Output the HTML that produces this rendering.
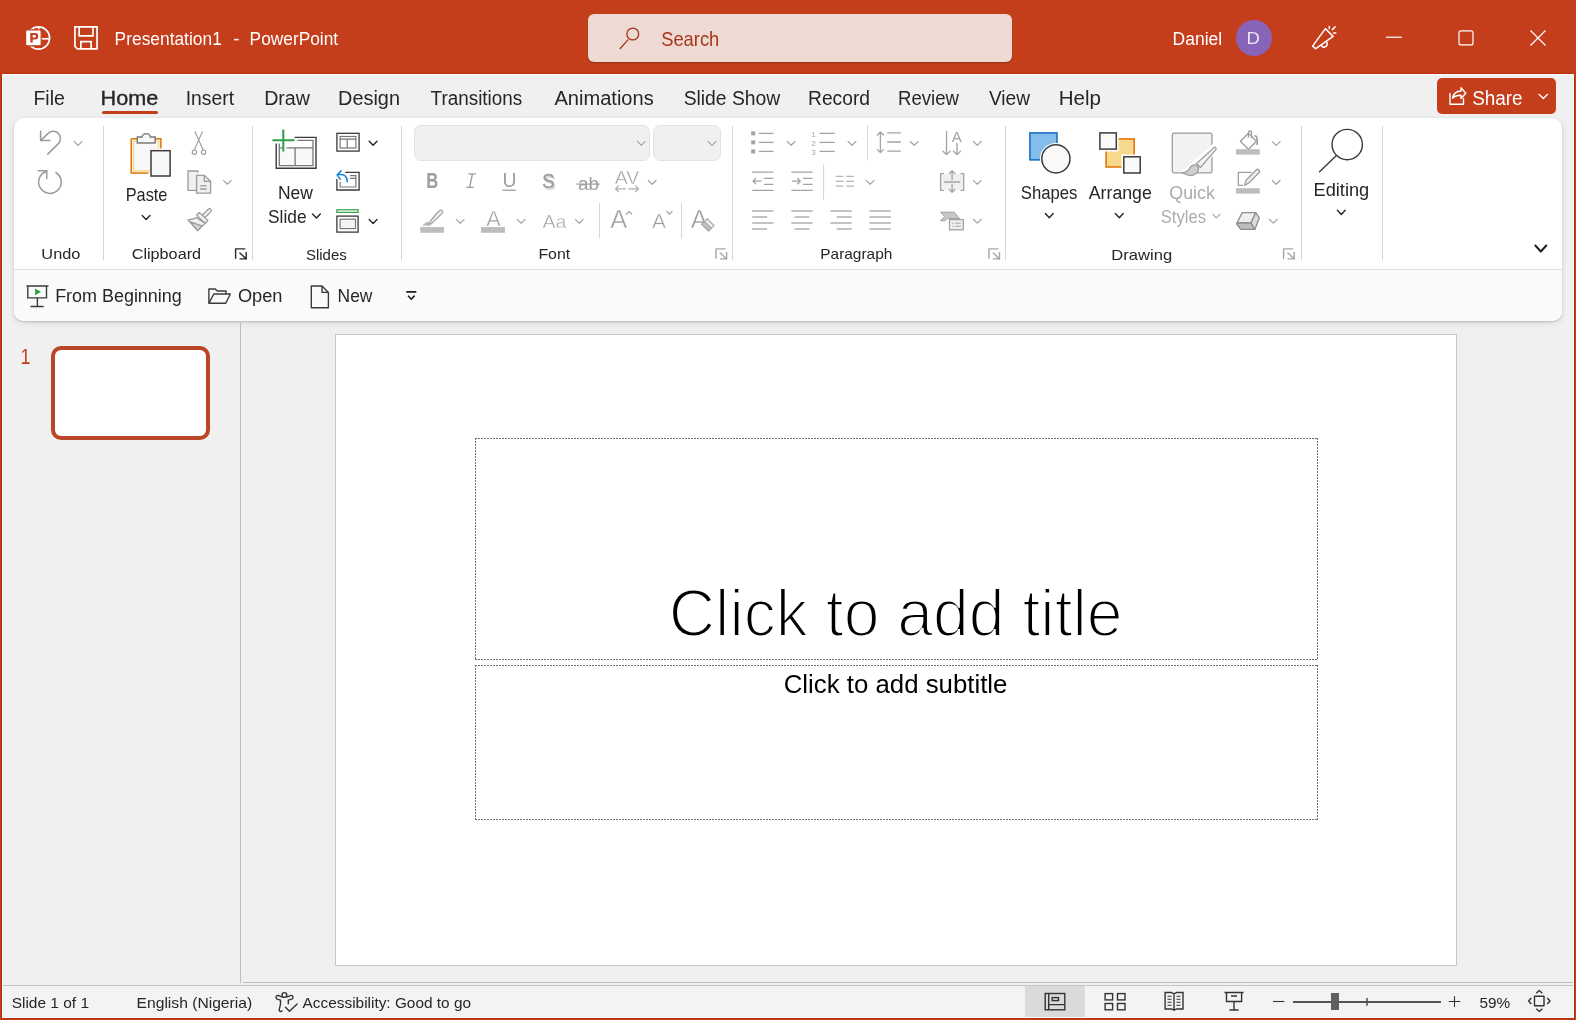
<!DOCTYPE html>
<html><head><meta charset="utf-8"><title>PowerPoint</title>
<style>
html,body{margin:0;padding:0;}
body{width:1576px;height:1020px;overflow:hidden;position:relative;background:#C43E1C;font-family:"Liberation Sans",sans-serif;}
svg text{font-kerning:normal;}
</style></head><body>
<div style="position:absolute;left:1px;top:73px;width:1574px;height:946px;background:#BE2E0A"></div>
<div style="position:absolute;left:2px;top:74px;width:1572px;height:944px;background:#F4FCFC"></div>
<div style="position:absolute;left:3px;top:75px;width:1570px;height:942px;background:#F0F0F0"></div>
<div style="position:absolute;left:14px;top:118px;width:1548px;height:203px;background:#FFFFFF;border-radius:10px;box-shadow:0 1px 2px rgba(0,0,0,0.16), 0 2px 7px rgba(0,0,0,0.10)"></div>
<div style="position:absolute;left:14px;top:269px;width:1548px;height:52px;background:#FAFAFA;border-radius:0 0 10px 10px;border-top:1px solid #E1E1E1;box-sizing:border-box"></div>
<div style="position:absolute;left:588px;top:14px;width:424px;height:48px;background:#EFD9D3;border-radius:6px;box-shadow:0 1px 2px rgba(0,0,0,0.25)"></div>
<div style="position:absolute;left:1236px;top:20px;width:36px;height:36px;background:#8764B8;border-radius:50%"></div>
<div style="position:absolute;left:1437px;top:78px;width:119px;height:36px;background:#C43E1C;border-radius:5px"></div>
<div style="position:absolute;left:240px;top:322px;width:1px;height:661px;background:#BEBEBE"></div>
<div style="position:absolute;left:243px;top:982px;width:1330px;height:1px;background:#BEBEBE"></div>
<div style="position:absolute;left:3px;top:985px;width:1570px;height:1px;background:#C4C4C4"></div>
<div style="position:absolute;left:3px;top:986px;width:1570px;height:31px;background:#F3F3F3"></div>
<div style="position:absolute;left:1025px;top:986px;width:60px;height:31px;background:#DADADA"></div>
<div style="position:absolute;left:335px;top:334px;width:1122px;height:632px;background:#FFFFFF;border:1px solid #C6C6C6;box-sizing:border-box"></div>
<div style="position:absolute;left:51px;top:346px;width:159px;height:94px;background:#FFFFFF;border:4px solid #BB4527;border-radius:10px;box-sizing:border-box"></div>
<div style="position:absolute;left:414px;top:125px;width:236px;height:36px;background:#F0F0F0;border:1px solid #E3E3E3;border-radius:7px;box-sizing:border-box"></div>
<div style="position:absolute;left:653px;top:125px;width:68px;height:36px;background:#F0F0F0;border:1px solid #E3E3E3;border-radius:7px;box-sizing:border-box"></div>
<div style="position:absolute;left:102px;top:111px;width:56px;height:3px;background:#C43E1C;border-radius:2px"></div>
<svg style="position:absolute;left:0;top:0;will-change:transform" width="1576" height="1020" viewBox="0 0 1576 1020">
<text x="114.61" y="44.70" font-family="Liberation Sans" font-size="18.31" font-weight="normal" fill="#FFFFFF" textLength="107.19" lengthAdjust="spacingAndGlyphs" >Presentation1</text>
<text x="233.18" y="44.70" font-family="Liberation Sans" font-size="18.31" font-weight="normal" fill="#FFFFFF" textLength="6.10" lengthAdjust="spacingAndGlyphs" >-</text>
<text x="249.61" y="44.70" font-family="Liberation Sans" font-size="18.31" font-weight="normal" fill="#FFFFFF" textLength="88.54" lengthAdjust="spacingAndGlyphs" >PowerPoint</text>
<text x="661.18" y="46.00" font-family="Liberation Sans" font-size="20.06" font-weight="normal" fill="#A5371B" textLength="58.08" lengthAdjust="spacingAndGlyphs" >Search</text>
<text x="1172.60" y="45.00" font-family="Liberation Sans" font-size="19.19" font-weight="normal" fill="#FFFFFF" textLength="49.53" lengthAdjust="spacingAndGlyphs" >Daniel</text>
<text x="1246.52" y="44.00" font-family="Liberation Sans" font-size="15.99" font-weight="normal" fill="#EDE6F7" textLength="13.35" lengthAdjust="spacingAndGlyphs" >D</text>
<text x="33.44" y="104.80" font-family="Liberation Sans" font-size="19.91" font-weight="normal" fill="#262626" textLength="31.36" lengthAdjust="spacingAndGlyphs" >File</text>
<text x="185.76" y="104.80" font-family="Liberation Sans" font-size="19.91" font-weight="normal" fill="#262626" textLength="48.36" lengthAdjust="spacingAndGlyphs" >Insert</text>
<text x="264.13" y="104.80" font-family="Liberation Sans" font-size="19.91" font-weight="normal" fill="#262626" textLength="45.84" lengthAdjust="spacingAndGlyphs" >Draw</text>
<text x="338.11" y="104.80" font-family="Liberation Sans" font-size="19.91" font-weight="normal" fill="#262626" textLength="61.84" lengthAdjust="spacingAndGlyphs" >Design</text>
<text x="430.62" y="104.80" font-family="Liberation Sans" font-size="19.91" font-weight="normal" fill="#262626" textLength="91.61" lengthAdjust="spacingAndGlyphs" >Transitions</text>
<text x="554.40" y="104.80" font-family="Liberation Sans" font-size="19.91" font-weight="normal" fill="#262626" textLength="99.34" lengthAdjust="spacingAndGlyphs" >Animations</text>
<text x="683.63" y="104.80" font-family="Liberation Sans" font-size="19.91" font-weight="normal" fill="#262626" textLength="96.63" lengthAdjust="spacingAndGlyphs" >Slide Show</text>
<text x="808.06" y="104.80" font-family="Liberation Sans" font-size="19.91" font-weight="normal" fill="#262626" textLength="61.96" lengthAdjust="spacingAndGlyphs" >Record</text>
<text x="898.01" y="104.80" font-family="Liberation Sans" font-size="19.91" font-weight="normal" fill="#262626" textLength="60.97" lengthAdjust="spacingAndGlyphs" >Review</text>
<text x="988.90" y="104.80" font-family="Liberation Sans" font-size="19.91" font-weight="normal" fill="#262626" textLength="41.09" lengthAdjust="spacingAndGlyphs" >View</text>
<text x="1058.66" y="104.80" font-family="Liberation Sans" font-size="19.91" font-weight="normal" fill="#262626" textLength="42.20" lengthAdjust="spacingAndGlyphs" >Help</text>
<text x="100.57" y="104.80" font-family="Liberation Sans" font-size="19.91" font-weight="normal" fill="#262626" textLength="57.75" lengthAdjust="spacingAndGlyphs" stroke="#262626" stroke-width="0.35">Home</text>
<text x="1472.15" y="104.80" font-family="Liberation Sans" font-size="19.91" font-weight="normal" fill="#FFFFFF" textLength="50.37" lengthAdjust="spacingAndGlyphs" >Share</text>
<text x="41.37" y="259.30" font-family="Liberation Sans" font-size="15.41" font-weight="normal" fill="#262626" textLength="39.09" lengthAdjust="spacingAndGlyphs" >Undo</text>
<text x="131.69" y="258.50" font-family="Liberation Sans" font-size="15.41" font-weight="normal" fill="#262626" textLength="69.37" lengthAdjust="spacingAndGlyphs" >Clipboard</text>
<text x="305.92" y="259.50" font-family="Liberation Sans" font-size="15.41" font-weight="normal" fill="#262626" textLength="40.88" lengthAdjust="spacingAndGlyphs" >Slides</text>
<text x="538.43" y="258.50" font-family="Liberation Sans" font-size="15.41" font-weight="normal" fill="#262626" textLength="31.66" lengthAdjust="spacingAndGlyphs" >Font</text>
<text x="820.27" y="259.00" font-family="Liberation Sans" font-size="15.41" font-weight="normal" fill="#262626" textLength="72.04" lengthAdjust="spacingAndGlyphs" >Paragraph</text>
<text x="1111.27" y="259.50" font-family="Liberation Sans" font-size="15.41" font-weight="normal" fill="#262626" textLength="60.86" lengthAdjust="spacingAndGlyphs" >Drawing</text>
<text x="125.70" y="201.00" font-family="Liberation Sans" font-size="18.31" font-weight="normal" fill="#262626" textLength="41.69" lengthAdjust="spacingAndGlyphs" >Paste</text>
<text x="278.00" y="198.60" font-family="Liberation Sans" font-size="18.31" font-weight="normal" fill="#262626" textLength="34.92" lengthAdjust="spacingAndGlyphs" >New</text>
<text x="268.02" y="222.70" font-family="Liberation Sans" font-size="18.31" font-weight="normal" fill="#262626" textLength="38.55" lengthAdjust="spacingAndGlyphs" >Slide</text>
<text x="1020.75" y="198.90" font-family="Liberation Sans" font-size="18.46" font-weight="normal" fill="#262626" textLength="56.67" lengthAdjust="spacingAndGlyphs" >Shapes</text>
<text x="1088.80" y="198.90" font-family="Liberation Sans" font-size="18.46" font-weight="normal" fill="#262626" textLength="62.96" lengthAdjust="spacingAndGlyphs" >Arrange</text>
<text x="1169.19" y="198.90" font-family="Liberation Sans" font-size="18.46" font-weight="normal" fill="#ADADAD" textLength="45.83" lengthAdjust="spacingAndGlyphs" >Quick</text>
<text x="1160.75" y="222.60" font-family="Liberation Sans" font-size="18.31" font-weight="normal" fill="#ADADAD" textLength="45.20" lengthAdjust="spacingAndGlyphs" >Styles</text>
<text x="1313.54" y="196.00" font-family="Liberation Sans" font-size="18.02" font-weight="normal" fill="#262626" textLength="55.69" lengthAdjust="spacingAndGlyphs" >Editing</text>
<text x="55.17" y="302.00" font-family="Liberation Sans" font-size="19.19" font-weight="normal" fill="#262626" textLength="126.59" lengthAdjust="spacingAndGlyphs" >From Beginning</text>
<text x="237.88" y="302.00" font-family="Liberation Sans" font-size="19.19" font-weight="normal" fill="#262626" textLength="44.63" lengthAdjust="spacingAndGlyphs" >Open</text>
<text x="337.61" y="302.00" font-family="Liberation Sans" font-size="19.19" font-weight="normal" fill="#262626" textLength="34.81" lengthAdjust="spacingAndGlyphs" >New</text>
<text x="11.70" y="1007.60" font-family="Liberation Sans" font-size="15.12" font-weight="normal" fill="#262626" textLength="77.35" lengthAdjust="spacingAndGlyphs" >Slide 1 of 1</text>
<text x="136.55" y="1007.60" font-family="Liberation Sans" font-size="15.12" font-weight="normal" fill="#262626" textLength="115.62" lengthAdjust="spacingAndGlyphs" >English (Nigeria)</text>
<text x="302.60" y="1007.60" font-family="Liberation Sans" font-size="15.12" font-weight="normal" fill="#262626" textLength="168.41" lengthAdjust="spacingAndGlyphs" >Accessibility: Good to go</text>
<text x="1479.38" y="1007.60" font-family="Liberation Sans" font-size="15.12" font-weight="normal" fill="#262626" textLength="30.78" lengthAdjust="spacingAndGlyphs" >59%</text>
<text x="20.46" y="364.00" font-family="Liberation Sans" font-size="22.53" font-weight="normal" fill="#C43E1C" textLength="9.97" lengthAdjust="spacingAndGlyphs" >1</text>
<text x="668.68" y="636.10" font-family="Liberation Sans" font-size="67.15" font-weight="normal" fill="#000000" textLength="453.90" lengthAdjust="spacingAndGlyphs" stroke="#FFFFFF" stroke-width="2.2">Click to add title</text>
<text x="783.71" y="693.00" font-family="Liberation Sans" font-size="26.16" font-weight="normal" fill="#000000" textLength="223.75" lengthAdjust="spacingAndGlyphs" >Click to add subtitle</text>
<line x1="475" y1="438.5" x2="1318" y2="438.5" stroke="#707070" stroke-width="1" stroke-dasharray="2 1" shape-rendering="crispEdges"/>
<line x1="475" y1="659.5" x2="1318" y2="659.5" stroke="#707070" stroke-width="1" stroke-dasharray="2 1" shape-rendering="crispEdges"/>
<line x1="475.5" y1="438" x2="475.5" y2="660" stroke="#707070" stroke-width="1" stroke-dasharray="2 1" shape-rendering="crispEdges"/>
<line x1="1317.5" y1="438" x2="1317.5" y2="660" stroke="#707070" stroke-width="1" stroke-dasharray="2 1" shape-rendering="crispEdges"/>
<line x1="475" y1="665.5" x2="1318" y2="665.5" stroke="#707070" stroke-width="1" stroke-dasharray="2 1" shape-rendering="crispEdges"/>
<line x1="475" y1="819.5" x2="1318" y2="819.5" stroke="#707070" stroke-width="1" stroke-dasharray="2 1" shape-rendering="crispEdges"/>
<line x1="475.5" y1="665" x2="475.5" y2="820" stroke="#707070" stroke-width="1" stroke-dasharray="2 1" shape-rendering="crispEdges"/>
<line x1="1317.5" y1="665" x2="1317.5" y2="820" stroke="#707070" stroke-width="1" stroke-dasharray="2 1" shape-rendering="crispEdges"/>
<line x1="103.5" y1="126" x2="103.5" y2="260" stroke="#D6D6D6" stroke-width="1"/>
<line x1="252.5" y1="126" x2="252.5" y2="260" stroke="#D6D6D6" stroke-width="1"/>
<line x1="401.5" y1="126" x2="401.5" y2="260" stroke="#D6D6D6" stroke-width="1"/>
<line x1="732.5" y1="126" x2="732.5" y2="260" stroke="#D6D6D6" stroke-width="1"/>
<line x1="1005.5" y1="126" x2="1005.5" y2="260" stroke="#D6D6D6" stroke-width="1"/>
<line x1="1301.5" y1="126" x2="1301.5" y2="260" stroke="#D6D6D6" stroke-width="1"/>
<line x1="1382.5" y1="126" x2="1382.5" y2="260" stroke="#D6D6D6" stroke-width="1"/>
<g><circle cx="38.5" cy="38" r="11.1" fill="none" stroke="#fff" stroke-width="1.6"/><line x1="38.8" y1="27" x2="38.8" y2="31" stroke="#fff" stroke-width="1.6"/><line x1="41" y1="38.8" x2="49.5" y2="38.8" stroke="#fff" stroke-width="1.6"/><rect x="25.6" y="29.8" width="15.6" height="16" rx="1.6" fill="#fff" stroke="#C43E1C" stroke-width="1.2"/><path d="M30.3 33 H35 A3.3 3.3 0 0 1 35 39.6 H32.7 V42.6 H30.3 Z M32.7 35 V37.6 H34.7 A1.3 1.3 0 0 0 34.7 35 Z" fill="#C43E1C" fill-rule="evenodd"/></g>
<path d="M74.95 26.95 H97.05 V48.95 H77.4 L74.95 46.5 Z M79.15 27.5 V35.85 H92.95 V27.5 M80.85 48.5 V41.65 H91.15 V48.5" fill="none" stroke="#fff" stroke-width="1.7" stroke-linejoin="miter"/>
<circle cx="632.8" cy="34" r="5.9" fill="none" stroke="#A5371B" stroke-width="1.3"/><line x1="627.9" y1="39.9" x2="620.2" y2="48.5" stroke="#A5371B" stroke-width="1.3" stroke-linecap="round"/>
<g fill="none" stroke="#fff" stroke-width="1.5" stroke-linejoin="round" stroke-linecap="round"><path d="M1325.4 28.6 L1333.1 36.4 L1315.8 48.7 L1312.6 46.1 Z"/><path d="M1321.4 45.5 A3 3 0 1 0 1326.8 42.2"/><line x1="1329.3" y1="26.4" x2="1329.3" y2="28.4"/><line x1="1332.3" y1="29.6" x2="1335.2" y2="26.8"/><line x1="1333.6" y1="32.9" x2="1335.8" y2="32.9"/></g>
<line x1="1386" y1="37.2" x2="1401.8" y2="37.2" stroke="#fff" stroke-width="1.2"/><rect x="1459" y="30.9" width="14" height="14" rx="2" fill="none" stroke="#fff" stroke-width="1.2"/><path d="M1530.5 30.5 L1545.5 45.5 M1545.5 30.5 L1530.5 45.5" stroke="#fff" stroke-width="1.2"/>
<g fill="none" stroke="#fff" stroke-width="1.4" stroke-linejoin="round" stroke-linecap="round"><path d="M1450 93.5 V104.2 H1463.5 V98.5"/><path d="M1452.6 98.2 C1453.5 93.5 1456.5 91 1461 91 V87.8 L1465.8 93.2 L1461 98.5 V95.2 C1457.5 95.2 1454.5 96 1452.6 98.2 Z"/><path d="M1539.2 94.6 L1543.3 98.4 L1547.4 94.6"/></g>
<g fill="none" stroke="#9B9B9B" stroke-width="1.5" stroke-linecap="round" stroke-linejoin="round"><path d="M40.6 131.3 V140.6 H49.9 M40.6 140.6 L48.2 133.4 A7.2 7.2 0 0 1 58.4 143.6 L47.8 154.1"/><path d="M55.9 172.5 A11.3 11.3 0 1 1 46.9 171.2"/><path d="M38.3 170.7 H46.7 V178.5"/></g>
<path d="M74.3 141.5 L78.1 145.3 L81.9 141.5" fill="none" stroke="#A6A6A6" stroke-width="1.2" stroke-linecap="round" stroke-linejoin="round"/>
<g><path d="M131.2 138.8 H160.9 V148.5 M148.5 173 H131.2 V138.8" fill="none" stroke="#E07400" stroke-width="1.5"/><path d="M132.7 140.3 H159.4 V148.5 H150.3 V171.5 H132.7 Z" fill="#F8D98C"/><path d="M134.2 141.8 H157.9 V148.5 H150.3 V170 H134.2 Z" fill="#F8F8F8"/><path d="M137.3 143 V137 H142 A4.3 4.3 0 0 1 150.4 137 H155.1 V143 Z" fill="#F6F6F6" stroke="#7A7A7A" stroke-width="1.4"/><rect x="151" y="150.7" width="19.1" height="25.3" fill="#F8F8F8" stroke="#3C3C3C" stroke-width="1.5"/></g>
<path d="M142.2 215.5 L146.1 219.5 L150.0 215.5" fill="none" stroke="#262626" stroke-width="1.4" stroke-linecap="round" stroke-linejoin="round"/>
<g fill="none" stroke="#9B9B9B" stroke-width="1.1"><path d="M194.8 131.2 L203.2 150 M202.6 131.2 L194.2 150"/><circle cx="194.4" cy="152.2" r="2.2"/><circle cx="203.6" cy="152.2" r="2.2"/></g>
<g fill="#F0F0F0" stroke="#9B9B9B" stroke-width="1.3" stroke-linejoin="miter"><path d="M196.3 190.3 H188 V171 H197.3 L198.6 172.3"/><path d="M196.6 175.3 H204.3 L210.6 181.3 V193.1 H196.6 Z"/><path d="M204.3 175.3 V181.3 H210.6" fill="none"/><path d="M200.2 185.8 H206.6 M200.2 189 H206.6" fill="none"/></g>
<path d="M223.5 180.4 L227.4 184.2 L231.3 180.4" fill="none" stroke="#A6A6A6" stroke-width="1.2" stroke-linecap="round" stroke-linejoin="round"/>
<g stroke="#9B9B9B" stroke-width="1.3" stroke-linejoin="round"><path d="M202.2 215.2 L208.3 209.2 A1.7 1.7 0 0 1 210.8 211.6 L204.8 217.7 Z" fill="#F4F4F4"/><path d="M196.6 217.6 L205.1 223.3 L197.6 230.6 C194.5 227.3 191.2 223.3 187.9 219.8 C191.5 219.6 194 218.8 196.6 217.6 Z" fill="#F0F0F0"/><path d="M190.3 221.8 L202 225.9 L197.6 230.6 Z" fill="#D3D3D3"/><path d="M199.3 212.4 L207.9 220.6 L205.2 223.4 L196.6 215.1 Z" fill="#F2F2F2"/></g>
<g fill="none" stroke="#262626" stroke-width="1.4" stroke-linecap="round" stroke-linejoin="round"><path d="M244.7 248.9 H235.6 V258.2"/><path d="M239.9 252.9 L246.2 258.9 M240.1 258.9 H246.2 V252.5"/></g>
<g fill="none" stroke-linejoin="miter"><path d="M294.6 137.4 H316 V168.3 H276.2 V143.6" stroke="#3A3A3A" stroke-width="1.4"/><rect x="279.7" y="147.8" width="33" height="17.5" fill="#F8F8F8" stroke="none"/><path d="M297.4 140.4 H313 V165.6 H279.3 V143.6 M286.4 147.8 H313 M279.3 147.8 H282 M295.1 147.8 V165.6" stroke="#787878" stroke-width="1.3"/><path d="M272.4 140.3 H294.6 M283.3 129.4 V151.6" stroke="#2E9E48" stroke-width="2"/></g>
<path d="M312.5 213.9 L316.4 218.1 L320.3 213.9" fill="none" stroke="#262626" stroke-width="1.4" stroke-linecap="round" stroke-linejoin="round"/>
<g fill="none"><rect x="336.9" y="133.3" width="22.2" height="17.8" stroke="#3A3A3A" stroke-width="1.3"/><rect x="340.1" y="136.5" width="15.8" height="11.5" stroke="#787878" stroke-width="1.2"/><path d="M340.1 139.1 H355.9 M347.2 139.1 V148" stroke="#787878" stroke-width="1.2"/><path d="M345.3 172.4 H359.1 V190 H336.9 V179" stroke="#3A3A3A" stroke-width="1.3"/><path d="M350 175.7 H355.9 V187 H340.1 V182 M350 178.3 H355.9" stroke="#787878" stroke-width="1.2"/><path d="M347.3 181.8 C347.3 176 344 173.5 337.3 174.8 M341.2 170.9 L337.1 174.9 L340.3 179.2" stroke="#1E88D8" stroke-width="1.5" stroke-linecap="round" stroke-linejoin="round"/><rect x="336.9" y="209.8" width="21.2" height="2.6" stroke="#2E9E48" stroke-width="1.2"/><rect x="336.9" y="216.1" width="21.2" height="16" stroke="#3A3A3A" stroke-width="1.3"/><rect x="340.1" y="219.2" width="15.4" height="9.4" fill="#F4F4F4" stroke="#787878" stroke-width="1.2"/></g>
<path d="M369.2 141.3 L373.1 145.3 L377.0 141.3" fill="none" stroke="#262626" stroke-width="1.4" stroke-linecap="round" stroke-linejoin="round"/>
<path d="M369.2 219.4 L373.1 223.4 L377.0 219.4" fill="none" stroke="#262626" stroke-width="1.4" stroke-linecap="round" stroke-linejoin="round"/>
<path d="M637.4 141.4 L641.3 145.4 L645.2 141.4" fill="none" stroke="#A6A6A6" stroke-width="1.2" stroke-linecap="round" stroke-linejoin="round"/>
<path d="M708.1 141.4 L712.0 145.4 L715.9 141.4" fill="none" stroke="#A6A6A6" stroke-width="1.2" stroke-linecap="round" stroke-linejoin="round"/>
<text x="426.3" y="188" font-family="Liberation Sans" font-weight="bold" font-size="21.5" fill="#9E9E9E" textLength="12" lengthAdjust="spacingAndGlyphs">B</text>
<path d="M468.3 173.9 H476 M466.1 187.4 H473.8 M472.4 173.9 L469.6 187.4" fill="none" stroke="#9E9E9E" stroke-width="1.4"/>
<text x="502.6" y="187.1" font-family="Liberation Sans" font-size="20" fill="#9E9E9E" textLength="14" lengthAdjust="spacingAndGlyphs">U</text>
<line x1="502.4" y1="190.2" x2="515.9" y2="190.2" stroke="#9E9E9E" stroke-width="1.3"/>
<text x="543.5" y="189.6" font-family="Liberation Sans" font-size="20.5" fill="#D6D6D6" textLength="12.5" lengthAdjust="spacingAndGlyphs">S</text>
<text x="542.2" y="188.4" font-family="Liberation Sans" font-size="20.5" fill="#9E9E9E" textLength="12.5" lengthAdjust="spacingAndGlyphs" stroke="#9E9E9E" stroke-width="0.5">S</text>
<text x="578" y="189.5" font-family="Liberation Sans" font-size="18" fill="#9E9E9E" textLength="21" lengthAdjust="spacingAndGlyphs">ab</text>
<line x1="576.2" y1="184.1" x2="599.8" y2="184.1" stroke="#9E9E9E" stroke-width="1.2"/>
<text x="614.8" y="184" font-family="Liberation Sans" font-size="19" fill="#9E9E9E" textLength="24.5" stroke="#FFFFFF" stroke-width="0.45" lengthAdjust="spacingAndGlyphs">AV</text>
<g fill="none" stroke="#B0B0B0" stroke-width="1.2" stroke-linecap="round" stroke-linejoin="round"><path d="M615.5 188.8 H625.5 M618.5 185.9 L615.5 188.8 L618.5 191.7"/><path d="M628.6 188.8 H638.5 M635.5 185.9 L638.5 188.8 L635.5 191.7"/></g>
<path d="M648.3 180.5 L652.2 184.3 L656.1 180.5" fill="none" stroke="#A6A6A6" stroke-width="1.2" stroke-linecap="round" stroke-linejoin="round"/>
<g stroke-linejoin="round"><path d="M427.5 225.5 L430.8 220.5 L436.2 214 L439.6 210.6 A1.8 1.8 0 0 1 442.2 213.2 L438.8 216.6 L432.2 222.9 Z" fill="#EDEDED" stroke="#A0A0A0" stroke-width="1.2"/><path d="M422 225.6 L427.5 221.4 L431.8 224.6 L429.6 225.6 Z" fill="#B6B6B6"/></g><rect x="420.2" y="227.1" width="23.8" height="5.7" fill="#BDBDBD"/>
<path d="M456.3 219.4 L460.2 223.2 L464.1 219.4" fill="none" stroke="#A6A6A6" stroke-width="1.2" stroke-linecap="round" stroke-linejoin="round"/>
<text x="486.2" y="225.5" font-family="Liberation Sans" font-size="22" fill="#9E9E9E" textLength="14.5" stroke="#FFFFFF" stroke-width="0.45" lengthAdjust="spacingAndGlyphs">A</text><rect x="481" y="227.1" width="23.9" height="5.7" fill="#BDBDBD"/>
<path d="M517.3 219.4 L521.2 223.2 L525.1 219.4" fill="none" stroke="#A6A6A6" stroke-width="1.2" stroke-linecap="round" stroke-linejoin="round"/>
<text x="542.4" y="228.3" font-family="Liberation Sans" font-size="19" fill="#9E9E9E" textLength="24" stroke="#FFFFFF" stroke-width="0.45" lengthAdjust="spacingAndGlyphs">Aa</text>
<path d="M575.4 219.4 L579.3 223.2 L583.2 219.4" fill="none" stroke="#A6A6A6" stroke-width="1.2" stroke-linecap="round" stroke-linejoin="round"/>
<line x1="599.5" y1="203" x2="599.5" y2="238.6" stroke="#D6D6D6" stroke-width="1"/><line x1="681.5" y1="203" x2="681.5" y2="238.6" stroke="#D6D6D6" stroke-width="1"/>
<text x="610.2" y="228.3" font-family="Liberation Sans" font-size="26" fill="#9E9E9E" textLength="17" stroke="#FFFFFF" stroke-width="0.45" lengthAdjust="spacingAndGlyphs">A</text>
<path d="M626.4 214.2 L629.1 211.5 L631.8 214.2" fill="none" stroke="#9E9E9E" stroke-width="1.2" stroke-linecap="round"/>
<text x="652" y="228.3" font-family="Liberation Sans" font-size="21" fill="#9E9E9E" textLength="14" stroke="#FFFFFF" stroke-width="0.45" lengthAdjust="spacingAndGlyphs">A</text>
<path d="M666.7 211.4 L669.4 214.1 L672.1 211.4" fill="none" stroke="#9E9E9E" stroke-width="1.2" stroke-linecap="round"/>
<text x="690.8" y="228.3" font-family="Liberation Sans" font-size="26" fill="#9E9E9E" textLength="17" stroke="#FFFFFF" stroke-width="0.45" lengthAdjust="spacingAndGlyphs">A</text>
<path d="M701.8 224.2 L707.2 218.8 L714 225.6 L708.6 231 Z" fill="#F0F0F0" stroke="#A8A8A8" stroke-width="1.2"/><path d="M701.8 224.2 L704.5 221.5 L711.3 228.3 L708.6 231 Z" fill="#C4C4C4" stroke="#A8A8A8" stroke-width="1.2"/>
<g fill="none" stroke="#A6A6A6" stroke-width="1.4" stroke-linecap="round" stroke-linejoin="round"><path d="M725.1 248.9 H716.0 V258.2"/><path d="M720.3 252.9 L726.6 258.9 M720.5 258.9 H726.6 V252.5"/></g>
<g fill="none" stroke="#A3A3A3" stroke-width="1.3"><rect x="751.2" y="131.4" width="4" height="4" fill="#A3A3A3" stroke="none"/><line x1="758.8" y1="133.4" x2="773.5" y2="133.4"/><rect x="751.2" y="140.4" width="4" height="4" fill="#A3A3A3" stroke="none"/><line x1="758.8" y1="142.4" x2="773.5" y2="142.4"/><rect x="751.2" y="149.4" width="4" height="4" fill="#A3A3A3" stroke="none"/><line x1="758.8" y1="151.4" x2="773.5" y2="151.4"/><line x1="819.5" y1="133.4" x2="834.8" y2="133.4"/><line x1="819.5" y1="142.4" x2="834.8" y2="142.4"/><line x1="819.5" y1="151.4" x2="834.8" y2="151.4"/></g>
<text x="811.6" y="136.6" font-family="Liberation Sans" font-size="7.5" fill="#A3A3A3">1</text><text x="811.4" y="145.6" font-family="Liberation Sans" font-size="7.5" fill="#A3A3A3">2</text><text x="811.4" y="154.6" font-family="Liberation Sans" font-size="7.5" fill="#A3A3A3">3</text>
<path d="M787.2 141.5 L791.1 145.3 L795.0 141.5" fill="none" stroke="#A6A6A6" stroke-width="1.2" stroke-linecap="round" stroke-linejoin="round"/>
<path d="M848.1 141.5 L852.0 145.3 L855.9 141.5" fill="none" stroke="#A6A6A6" stroke-width="1.2" stroke-linecap="round" stroke-linejoin="round"/>
<line x1="867.5" y1="125" x2="867.5" y2="160.6" stroke="#D6D6D6" stroke-width="1"/>
<g fill="none" stroke="#A3A3A3" stroke-width="1.3" stroke-linecap="round" stroke-linejoin="round"><path d="M880.4 132 V152.6 M877.4 135 L880.4 132 L883.4 135 M877.4 149.6 L880.4 152.6 L883.4 149.6"/><path d="M887.2 132.9 H900.8 M887.2 142 H900.8 M887.2 151.2 H900.8" stroke-linecap="butt"/></g>
<path d="M910.3 141.5 L914.2 145.3 L918.1 141.5" fill="none" stroke="#A6A6A6" stroke-width="1.2" stroke-linecap="round" stroke-linejoin="round"/>
<g fill="none" stroke="#A3A3A3" stroke-width="1.3" stroke-linecap="round" stroke-linejoin="round"><path d="M946.5 131.3 V154.6 M943 151.2 L946.5 154.6 L950 151.2"/><path d="M957 143.5 V154.6 M953.5 151.2 L957 154.6 L960.5 151.2"/></g><text x="951.8" y="141.5" font-family="Liberation Sans" font-size="14" fill="#A3A3A3" textLength="10" lengthAdjust="spacingAndGlyphs">A</text>
<path d="M973.4 141.5 L977.3 145.3 L981.2 141.5" fill="none" stroke="#A6A6A6" stroke-width="1.2" stroke-linecap="round" stroke-linejoin="round"/>
<g fill="none" stroke="#A3A3A3" stroke-width="1.3" stroke-linecap="butt" stroke-linejoin="round"><path d="M752.2 172.2 H773.5 M764 178.4 H773.5 M764 184.3 H773.5 M752.2 190.3 H773.5"/><path d="M753 181.2 H761.5 M756 178.2 L753 181.2 L756 184.2"/><path d="M791.3 172.2 H812.6 M803 178.4 H812.6 M803 184.3 H812.6 M791.3 190.3 H812.6"/><path d="M791.8 181.2 H800.3 M797.3 178.2 L800.3 181.2 L797.3 184.2"/></g>
<line x1="823.6" y1="164.2" x2="823.6" y2="199.7" stroke="#D6D6D6" stroke-width="1"/>
<g fill="none" stroke="#B5B5B5" stroke-width="1.2"><path d="M835.7 176.3 H843.5 M835.7 181.3 H843.5 M835.7 186.2 H843.5 M846.3 176.3 H854 M846.3 181.3 H854 M846.3 186.2 H854"/></g>
<path d="M866.2 180.4 L870.1 184.2 L874.0 180.4" fill="none" stroke="#A6A6A6" stroke-width="1.2" stroke-linecap="round" stroke-linejoin="round"/>
<g fill="none" stroke="#A3A3A3" stroke-width="1.3" stroke-linecap="round" stroke-linejoin="round"><rect x="940.6" y="173.7" width="23" height="16.6" fill="#F0F0F0" stroke="none"/><path d="M943.3 173.7 H940.6 V190.4 H943.3 M961 173.7 H963.7 V190.4 H961"/><path d="M944.5 182 H959.8"/><path d="M952.1 170.8 V179.5 M949.3 173.5 L952.1 170.8 L954.9 173.5 M952.1 184.5 V192.2 M949.3 189.5 L952.1 192.2 L954.9 189.5"/></g>
<path d="M973.4 180.4 L977.3 184.2 L981.2 180.4" fill="none" stroke="#A6A6A6" stroke-width="1.2" stroke-linecap="round" stroke-linejoin="round"/>
<g stroke="#A3A3A3" stroke-width="1.3"><line x1="752.2" y1="211" x2="773.5" y2="211"/><line x1="752.2" y1="217" x2="767.2" y2="217"/><line x1="752.2" y1="223" x2="773.5" y2="223"/><line x1="752.2" y1="229" x2="767.2" y2="229"/></g>
<g stroke="#A3A3A3" stroke-width="1.3"><line x1="791.3" y1="211" x2="812.6" y2="211"/><line x1="794.5" y1="217" x2="809.4" y2="217"/><line x1="791.3" y1="223" x2="812.6" y2="223"/><line x1="794.5" y1="229" x2="809.4" y2="229"/></g>
<g stroke="#A3A3A3" stroke-width="1.3"><line x1="830.4" y1="211" x2="851.7" y2="211"/><line x1="836.7" y1="217" x2="851.7" y2="217"/><line x1="830.4" y1="223" x2="851.7" y2="223"/><line x1="836.7" y1="229" x2="851.7" y2="229"/></g>
<g stroke="#A3A3A3" stroke-width="1.3"><line x1="869.5" y1="211" x2="890.8" y2="211"/><line x1="869.5" y1="217" x2="890.8" y2="217"/><line x1="869.5" y1="223" x2="890.8" y2="223"/><line x1="869.5" y1="229" x2="890.8" y2="229"/></g>
<path d="M940.5 212.2 H954.2 L959.5 218.5 H947.5 L945 220.7 H940.5 L944.6 216.5 Z" fill="#C8C8C8" stroke="#A3A3A3" stroke-width="1"/><rect x="949.5" y="219.6" width="13.8" height="10.2" fill="#F0F0F0" stroke="#A3A3A3" stroke-width="1.3"/><path d="M952.3 223.3 H953.8 M955.3 223.3 H960.8 M952.3 226.3 H953.8 M955.3 226.3 H960.8" stroke="#A3A3A3" stroke-width="1.1"/>
<path d="M973.4 219.3 L977.3 223.1 L981.2 219.3" fill="none" stroke="#A6A6A6" stroke-width="1.2" stroke-linecap="round" stroke-linejoin="round"/>
<g fill="none" stroke="#A6A6A6" stroke-width="1.4" stroke-linecap="round" stroke-linejoin="round"><path d="M998.0 248.9 H988.9 V258.2"/><path d="M993.2 252.9 L999.5 258.9 M993.4 258.9 H999.5 V252.5"/></g>
<rect x="1029.9" y="132.9" width="27.1" height="27" fill="#83BDEB" stroke="#0F6CBD" stroke-width="1.5"/><circle cx="1055.9" cy="158.8" r="15.9" fill="#FFFFFF"/><circle cx="1055.9" cy="158.8" r="14.1" fill="#F9F9F9" stroke="#3B3B3B" stroke-width="1.5"/>
<path d="M1045.4 213.5 L1049.3 217.7 L1053.2 213.5" fill="none" stroke="#262626" stroke-width="1.4" stroke-linecap="round" stroke-linejoin="round"/>
<rect x="1106.1" y="138.9" width="28.1" height="28.1" fill="#F7D98E" stroke="#E07000" stroke-width="1.5"/><rect x="1097.5" y="130.5" width="21" height="21" fill="#FFFFFF"/><rect x="1099.9" y="132.9" width="16.4" height="16.2" fill="#F9F9F9" stroke="#3B3B3B" stroke-width="1.5"/><rect x="1121.5" y="154.5" width="21" height="21" fill="#FFFFFF"/><rect x="1123.8" y="156.8" width="16.4" height="16.2" fill="#F9F9F9" stroke="#3B3B3B" stroke-width="1.5"/>
<path d="M1115.4 213.5 L1119.3 217.7 L1123.2 213.5" fill="none" stroke="#262626" stroke-width="1.4" stroke-linecap="round" stroke-linejoin="round"/>
<rect x="1172.3" y="133.1" width="39.7" height="39.8" rx="1.8" fill="#F2F2F2" stroke="#9C9C9C" stroke-width="1.3"/><path d="M1180 173 L1196 173 L1214 155 L1214 143 Z" fill="#FFFFFF"/><path d="M1196.5 163.5 L1214.3 147.2 A1.6 1.6 0 0 1 1216 149.5 L1200.5 167.5 Z" fill="#F2F2F2" stroke="#9C9C9C" stroke-width="1.2"/><path d="M1182 172.6 C1186 172.8 1188 171 1189.5 168.3 C1191 165 1195 164 1197.5 166 C1199.5 168 1198.5 172 1195.5 174 C1192 176.3 1186.5 175.5 1182 172.6 Z" fill="#CFCFCF" stroke="#9C9C9C" stroke-width="1.2"/>
<path d="M1212.8 214.3 L1216.4 217.9 L1220.0 214.3" fill="none" stroke="#A6A6A6" stroke-width="1.2" stroke-linecap="round" stroke-linejoin="round"/>
<g stroke="#9E9E9E" stroke-width="1.3" fill="none" stroke-linejoin="round"><path d="M1240.3 141.3 L1248.5 133.3 L1256.5 141.3 L1248.5 149.2 Z" fill="#FFFFFF"/><path d="M1248.5 137.5 V132.5 A1.5 1.5 0 0 1 1251.5 132.5 V138"/><path d="M1254.5 136 C1256.5 135.5 1258 138 1257 145" stroke-width="1.6"/></g><rect x="1236" y="149.2" width="23.8" height="5.4" fill="#BDBDBD"/>
<path d="M1272.3 141.6 L1276.2 145.4 L1280.1 141.6" fill="none" stroke="#A6A6A6" stroke-width="1.2" stroke-linecap="round" stroke-linejoin="round"/>
<g stroke="#9E9E9E" stroke-width="1.3" fill="none" stroke-linejoin="round"><path d="M1251.6 172.4 H1238.3 V185.3 H1243"/><path d="M1244.6 185.4 L1246.2 180 L1256.2 170 A1.7 1.7 0 0 1 1259 172.8 L1249 182.8 Z" fill="#EFEFEF"/></g><rect x="1236" y="188.2" width="23.8" height="5.4" fill="#BDBDBD"/>
<path d="M1272.3 180.5 L1276.2 184.3 L1280.1 180.5" fill="none" stroke="#A6A6A6" stroke-width="1.2" stroke-linecap="round" stroke-linejoin="round"/>
<g stroke="#8E8E8E" stroke-width="1.3" stroke-linejoin="round"><path d="M1242.2 212.6 H1255.8 L1251 223 H1237 Z" fill="#EFEFEF"/><path d="M1237 223 H1251 L1254.8 229.4 H1240.8 L1236.6 224 Z" fill="#BEBEBE"/><path d="M1255.8 212.6 L1259.4 217.8 L1254.8 229.4 L1251 223 Z" fill="#DCDCDC"/></g>
<path d="M1269.4 219.3 L1273.3 223.1 L1277.2 219.3" fill="none" stroke="#A6A6A6" stroke-width="1.2" stroke-linecap="round" stroke-linejoin="round"/>
<g fill="none" stroke="#A6A6A6" stroke-width="1.4" stroke-linecap="round" stroke-linejoin="round"><path d="M1292.7 248.9 H1283.6 V258.2"/><path d="M1287.9 252.9 L1294.2 258.9 M1288.1 258.9 H1294.2 V252.5"/></g>
<circle cx="1347.2" cy="144.6" r="15.2" fill="none" stroke="#3B3B3B" stroke-width="1.4"/><line x1="1336.2" y1="155.8" x2="1319.5" y2="171.7" stroke="#3B3B3B" stroke-width="1.4" stroke-linecap="round"/>
<path d="M1337.4 210.2 L1341.3 214.4 L1345.2 210.2" fill="none" stroke="#262626" stroke-width="1.4" stroke-linecap="round" stroke-linejoin="round"/>
<path d="M1535.3 245.5 L1540.8 251.5 L1546.3 245.5" fill="none" stroke="#1F1F1F" stroke-width="2.0" stroke-linecap="round" stroke-linejoin="round"/>
<g fill="none" stroke="#3B3B3B" stroke-width="1.4"><path d="M26.4 286 H48.5 M27.8 286 V297.9 H46.5 V286 M37.4 297.9 V306.5 M30.5 306.5 H43.7"/></g><path d="M35.1 288.4 L41 291.8 L35.1 295.2 Z" fill="#2E9E48"/>
<g fill="none" stroke="#3B3B3B" stroke-width="1.4" stroke-linejoin="round"><path d="M208.9 303.3 V289 H215.3 L217.3 291 H226 V294"/><path d="M208.9 303.3 L213.8 294 H230.3 L225.8 303.3 Z"/></g>
<g fill="none" stroke="#3B3B3B" stroke-width="1.4" stroke-linejoin="round"><path d="M311.3 286 H322 L328.4 292.4 V307.8 H311.3 Z M322 286 V292.4 H328.4"/></g>
<g fill="none" stroke="#3B3B3B" stroke-width="1.4" stroke-linejoin="round"><path d="M406.3 291.9 H416.3 M408.1 295.8 L411.3 299.2 L414.6 295.6" stroke="#1F1F1F" stroke-width="1.6"/></g>
<g fill="none" stroke="#333333" stroke-width="1.4" stroke-linecap="round" stroke-linejoin="round"><circle cx="284.4" cy="995" r="2.4"/><path d="M281.7 996.9 L277.9 995.4 A1.95 1.95 0 0 0 277.1 999.1 L280.5 1000.1 V1004.2 L279.3 1009.3 A1.6 1.6 0 0 0 282.1 1010.8"/><path d="M287.2 996.9 L291.1 995.4 A1.95 1.95 0 0 1 291.9 999.1 L288.3 1000.1 V1003.7"/><path d="M285.4 1007.2 L289.5 1011.3 L297.1 1003.9"/></g>
<g fill="none" stroke="#333333" stroke-width="1.4"><rect x="1045.2" y="993.5" width="19.6" height="16.3"/><path d="M1048.7 993.5 V1009.8 M1048.7 1004.6 H1064.8"/><rect x="1052.2" y="997.6" width="6.3" height="3"/><rect x="1105.1" y="993.6" width="7.5" height="6.3"/><rect x="1117.5" y="993.6" width="7.5" height="6.3"/><rect x="1105.1" y="1003.5" width="7.5" height="6.3"/><rect x="1117.5" y="1003.5" width="7.5" height="6.3"/><path d="M1165.1 992.5 V1009 H1171.5 L1174 1010.3 L1176.5 1009 H1183 V992.5 H1176.5 L1174 994 L1171.5 992.5 Z M1174 994 V1009.5"/><path d="M1167.5 996.3 H1171.5 M1167.5 999.3 H1171.5 M1167.5 1002.3 H1171.5 M1167.5 1005.3 H1171.5 M1176.5 996.3 H1180.5 M1176.5 999.3 H1180.5 M1176.5 1002.3 H1180.5 M1176.5 1005.3 H1180.5" stroke-width="1.1"/><path d="M1224.5 992.5 H1243.6 M1226.5 992.5 V1001.5 H1241.6 V992.5 M1234 1001.5 V1010 M1229.5 1010 H1238.5 M1231 996 H1237" /></g>
<line x1="1273" y1="1001.5" x2="1284.4" y2="1001.5" stroke="#333333" stroke-width="1.1"/><line x1="1293" y1="1001.9" x2="1441" y2="1001.9" stroke="#555555" stroke-width="2"/><rect x="1331" y="993" width="8" height="17" fill="#5F5F5F"/><line x1="1367" y1="998" x2="1367" y2="1005.7" stroke="#555555" stroke-width="1.6"/><path d="M1448.7 1001.5 H1460.2 M1454.5 996.2 V1006.9" stroke="#333333" stroke-width="1.1"/>
<g fill="none" stroke="#333333" stroke-width="1.4" stroke-linejoin="round"><rect x="1534.5" y="996.2" width="9.5" height="9.5"/><path d="M1536.3 993.3 L1539.3 990.5 L1542.3 993.3 M1536.3 1008.8 L1539.3 1011.6 L1542.3 1008.8 M1531.3 998 L1528.6 1001 L1531.3 1004 M1547.3 998 L1550 1001 L1547.3 1004"/></g>
</svg>
</body></html>
